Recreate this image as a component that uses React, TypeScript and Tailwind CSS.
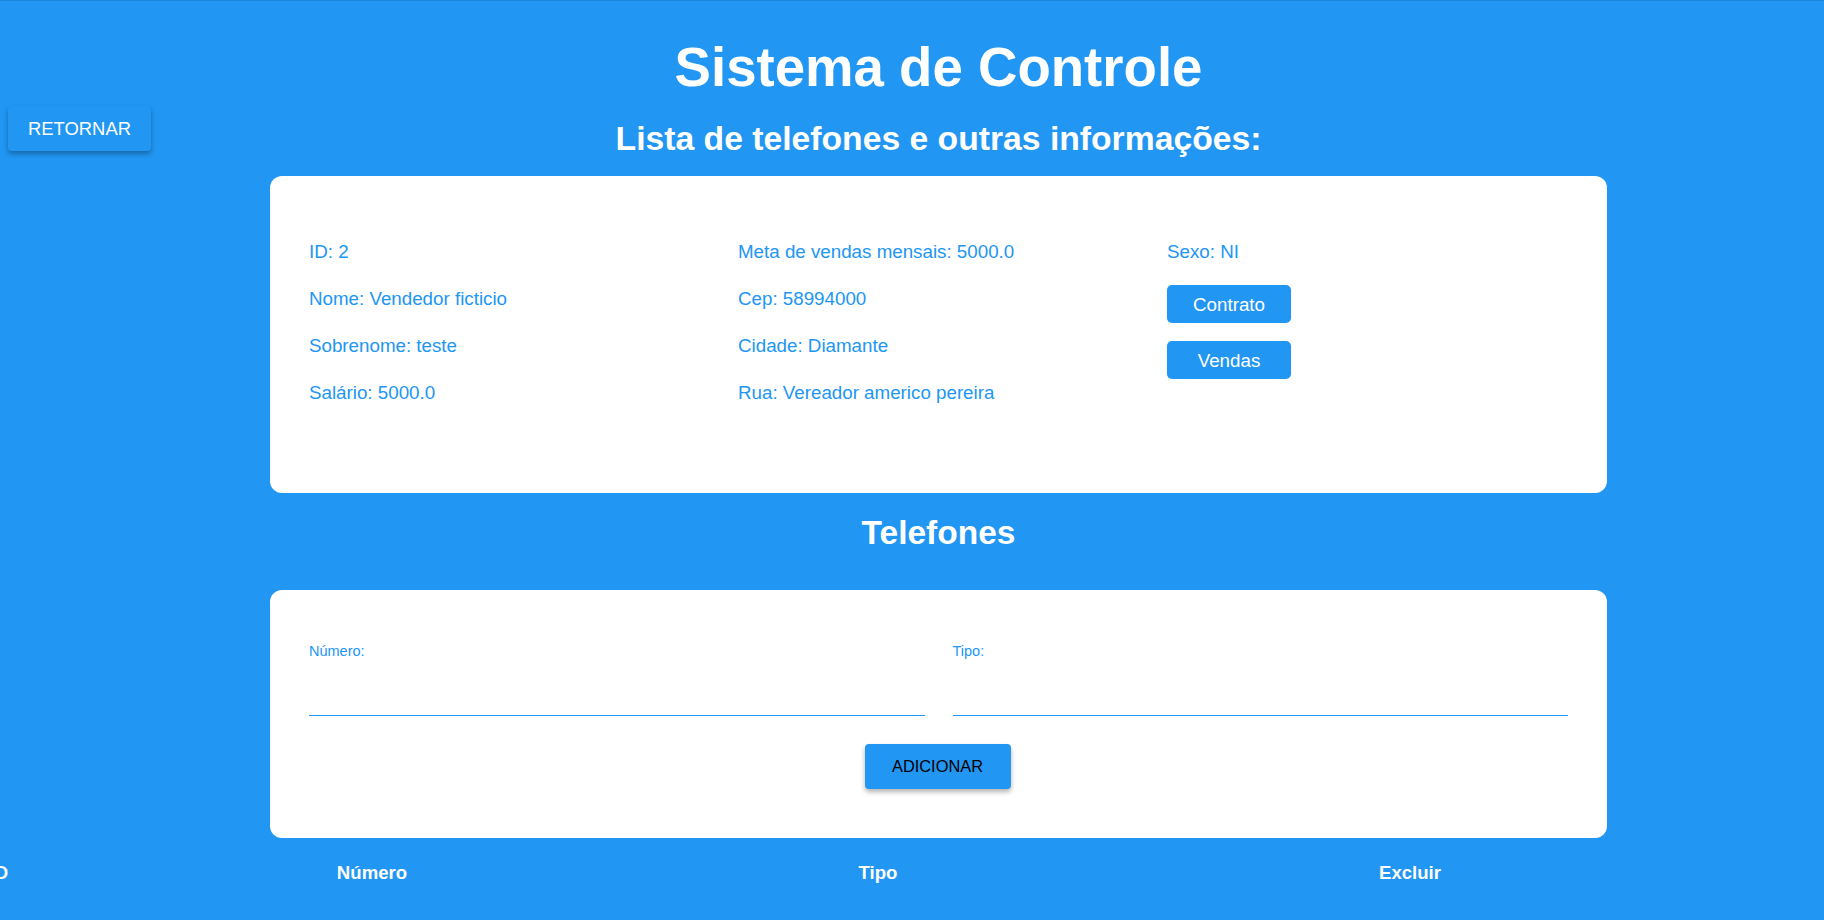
export default function App() {
  const col1 = ['ID: 2', 'Nome: Vendedor ficticio', 'Sobrenome: teste', 'Salário: 5000.0'];
  const col2 = ['Meta de vendas mensais: 5000.0', 'Cep: 58994000', 'Cidade: Diamante', 'Rua: Vereador americo pereira'];
  const fields = ['Número:', 'Tipo:'];
  const heads = [
    { label: 'ID', w: 'w-[398px]' },
    { label: 'Número', w: 'w-[348px]' },
    { label: 'Tipo', w: 'w-[664px]' },
    { label: 'Excluir', w: 'w-[400px]' },
  ];

  return (
    <div className="relative min-h-screen overflow-hidden border-t border-[#1d84d9] bg-[#2196f3] font-['Liberation_Sans',Arial,sans-serif]">
      <button className="absolute left-2 top-[105px] h-[45px] w-[143px] rounded bg-[#2196f3] text-[18.4px] text-white shadow-[0_3px_5px_rgba(0,0,0,0.3)]">
        RETORNAR
      </button>

      <div className="pl-[53px]">
        <div className="flex flex-col items-center">
          <h1 className="mt-[35px] text-[54.6px] font-bold leading-[64px] text-white">Sistema de Controle</h1>
          <h2 className="mt-[18px] text-[33.7px] font-bold leading-[40px] text-white">
            Lista de telefones e outras informações:
          </h2>

          <div className="mt-[18px] w-[1337px] rounded-xl bg-white px-[39px] pb-[87px] pt-[62px] text-[18.75px] leading-[27px] text-[#2196f3]">
            <div className="grid grid-cols-[429px_429px_1fr]">
              <div className="flex flex-col gap-5">
                {col1.map((t) => (
                  <p key={t}>{t}</p>
                ))}
              </div>
              <div className="flex flex-col gap-5">
                {col2.map((t) => (
                  <p key={t}>{t}</p>
                ))}
              </div>
              <div className="flex flex-col items-start">
                <p>Sexo: NI</p>
                <button className="mt-5 h-[38px] w-[124px] rounded-[5px] bg-[#2196f3] text-white">Contrato</button>
                <button className="mt-[18px] h-[38px] w-[124px] rounded-[5px] bg-[#2196f3] text-white">Vendas</button>
              </div>
            </div>
          </div>

          <h3 className="mt-[21px] text-[33.5px] font-bold leading-[37px] text-white">Telefones</h3>

          <div className="mt-[39px] flex w-[1337px] flex-col items-center rounded-xl bg-white px-[39px] pb-[49px] pt-[53px]">
            <div className="grid w-full grid-cols-2 gap-x-[28px]">
              {fields.map((f) => (
                <div key={f}>
                  <label className="block text-[14.5px] leading-4 text-[#2196f3]">{f}</label>
                  <div className="h-[57px] border-b border-[#2196f3]" />
                </div>
              ))}
            </div>
            <button className="mt-[28px] h-[45px] w-[146px] -translate-x-px rounded bg-[#2196f3] text-[16.4px] text-black shadow-[0_3px_5px_rgba(0,0,0,0.3)]">
              ADICIONAR
            </button>
          </div>
        </div>
      </div>

      <div className="ml-[-200px] mt-[24px] flex text-[18.6px] font-bold leading-[21px] text-white">
        {heads.map((h) => (
          <div key={h.label} className={`${h.w} text-center`}>
            {h.label}
          </div>
        ))}
      </div>
    </div>
  );
}
